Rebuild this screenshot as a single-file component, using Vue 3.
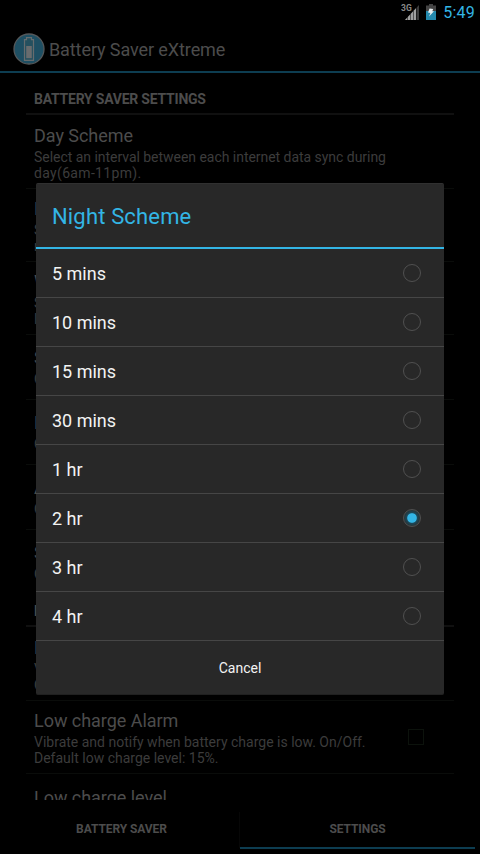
<script setup>
import { ref } from 'vue'

const options = ['5 mins', '10 mins', '15 mins', '30 mins', '1 hr', '2 hr', '3 hr', '4 hr']
const selected = ref(5)

const rows = [
  { title: 'Day Scheme', lines: ['Select an interval between each internet data sync during', 'day(6am-11pm).'], wide: true },
  { title: 'N', lines: ['S', 'n'] },
  { title: 'W', lines: ['S', 'N'] },
  { title: 'S', lines: ['C'] },
  { title: 'L', lines: ['C'] },
  { title: 'A', lines: ['C'] },
  { title: 'S', lines: ['C'] },
  { header: 'L' },
  { title: 'L', lines: ['V', 'C'] },
  {
    title: 'Low charge Alarm',
    lines: ['Vibrate and notify when battery charge is low. On/Off.', 'Default low charge level: 15%.'],
    check: true,
  },
  { title: 'Low charge level', lines: [] },
]
</script>

<template>
  <div class="screen">
    <header class="status">
      <svg class="signal" width="20" height="18" viewBox="0 0 20 18">
        <path d="M4 16 L18 1 V16 Z" fill="#3c3c3c" />
        <path d="M4 16 L15 4.2 V16 Z" fill="#a0a0a0" />
        <path d="M6.5 13 V16 M9.5 10 V16 M12.5 7 V16 M15.5 3 V16" stroke="#000" stroke-opacity="0.6" stroke-width="0.8" />
        <text x="0" y="7" class="net">3G</text>
      </svg>
      <svg class="battery" width="10" height="16" viewBox="0 0 10 16">
        <path d="M3 0 H7 V1.5 H10 V16 H0 V1.5 H3 Z" fill="#444" />
        <path d="M0 7 H10 V16 H0 Z" fill="#2489ad" />
        <path d="M3.6 4.5 L7.2 5 L6.3 7.2 H8 L3 12.5 L4.4 9 L2 8.5 Z" fill="#e8eef0" />
      </svg>
      <span class="clock">5:49</span>
    </header>
    <div class="appbar">
      <svg class="logo" width="32" height="32" viewBox="0 0 32 32">
        <circle cx="16" cy="16" r="15" fill="#1e4f63" stroke="#55595b" stroke-width="1.3" />
        <path d="M13.5 4.6 H18.5 V6.6 H20.5 V27.4 H11.5 V6.6 H13.5 Z" fill="#24505f" stroke="#666c6e" stroke-width="1.2" />
        <rect x="13.2" y="13" width="5.6" height="12.2" fill="#686c6e" />
      </svg>
      <h1>Battery Saver eXtreme</h1>
    </div>
    <main class="prefs">
      <div class="section first">BATTERY SAVER SETTINGS</div>
      <template v-for="(r, i) in rows" :key="i">
        <div v-if="r.header" class="section">{{ r.header }}</div>
        <div v-else class="pref" :class="{ short: r.lines.length === 1, last: !r.lines.length, plain: rows[i + 1]?.header }">
          <div class="info">
            <div class="title">{{ r.title }}</div>
            <div v-for="(l, j) in r.lines" :key="j" class="summary" :class="{ tight: r.wide && j === 0, wide: r.wide && j === 1 }">{{ l }}</div>
          </div>
          <span v-if="r.check" class="check"></span>
        </div>
      </template>
    </main>
    <nav class="tabs">
      <div class="tab">BATTERY SAVER</div>
      <div class="tab active">SETTINGS</div>
    </nav>
    <section class="dialog" role="dialog">
      <h2>Night Scheme</h2>
      <div v-for="(o, i) in options" :key="o" class="option" @click="selected = i">
        <span>{{ o }}</span>
        <i class="radio" :class="{ on: selected === i }"></i>
      </div>
      <button class="cancel">Cancel</button>
    </section>
  </div>
</template>

<style>
body { background: #000; }
</style>

<style scoped>
.screen {
  position: relative;
  display: flex;
  flex-direction: column;
  width: 480px;
  height: 854px;
  overflow: hidden;
  background: #000;
  color: #4c4c4c;
  font-family: Roboto, sans-serif;
}
.status { display: flex; flex: none; height: 25px; justify-content: flex-end; padding-right: 6px; box-sizing: border-box; }
.signal { margin: 4px 5px 0 0; }
.net { font: bold 8.5px Roboto, sans-serif; fill: #888; }
.battery { margin: 4px 7px 0 0; }
.clock { color: #33b5e5; font-size: 16px; line-height: 25px; letter-spacing: 0.2px; margin-right: -1px; }
.appbar { display: flex; flex: none; align-items: center; height: 48px; box-sizing: border-box; padding-left: 13px; gap: 4px; border-bottom: 2px solid #0d3d51; }
.logo { margin-top: 2px; }
h1 { margin: 2px 0 0; font-size: 18px; font-weight: 400; letter-spacing: -0.09px; }
.prefs { flex: none; height: 727px; overflow: hidden; padding: 0 26px; }
.section { box-sizing: border-box; height: 32px; padding: 0 8px; margin-bottom: 1px; border-bottom: 2px solid #101010; font-size: 14px; font-weight: 700; line-height: 32px; letter-spacing: -0.23px; }
.section.first { height: 42px; padding-top: 10px; }
.pref { display: flex; box-sizing: border-box; height: 73px; padding: 9px 8px 0; border-bottom: 1px solid #0a0c0a; }
.pref.short { height: 65px; padding-top: 12px; }
.pref.plain { border-bottom-color: transparent; }
.pref.last { padding-top: 13px; }
.info { flex: 1; white-space: nowrap; }
.title { margin-bottom: 2px; font-size: 18px; line-height: 22px; letter-spacing: -0.04px; }
.summary { font-size: 14px; line-height: 16px; color: #3c3c3c; }
.summary.tight { letter-spacing: -0.035px; }
.summary.wide { letter-spacing: 0.33px; }
.check { width: 14px; height: 14px; margin: 19px 22px 0 0; border: 1px solid #0c120c; }
.tabs { display: flex; flex: none; height: 54px; box-sizing: border-box; padding: 0 5px 5px 3px; }
.tab { flex: none; width: 237px; box-sizing: border-box; text-align: center; font-size: 12px; font-weight: 700; line-height: 58px; letter-spacing: -0.08px; background: linear-gradient(#070707, #070707) right 12px / 1px 36px no-repeat; }
.tab.active { width: 235px; background: none; border-bottom: 2px solid #0d3d51; }
.dialog { position: absolute; left: 36px; top: 183px; width: 408px; height: 512px; box-sizing: border-box; background: #282828; border-radius: 2px; border-top: 1px solid #303030; border-bottom: 1px solid #202020; overflow: hidden; }
h2 { box-sizing: border-box; height: 65px; margin: 0; padding-left: 16px; border-bottom: 2px solid #33b5e5; color: #33b5e5; font-size: 22px; font-weight: 400; line-height: 66px; letter-spacing: 0.16px; }
.option { display: flex; box-sizing: border-box; height: 49px; align-items: center; justify-content: space-between; padding: 0 23px 0 16px; border-bottom: 1px solid #464646; color: #f3f3f3; font-size: 18px; }
.radio { box-sizing: border-box; width: 18px; height: 18px; border: 1px solid #505050; border-radius: 50%; }
.radio.on { background: radial-gradient(circle, #33b5e5 0 4.3px, #1d4757 5.3px, #263438 8px); }
.cancel { display: block; width: 100%; height: 54px; padding: 0; border: 0; background: none; color: #f3f3f3; font: 14px Roboto, sans-serif; }
</style>
